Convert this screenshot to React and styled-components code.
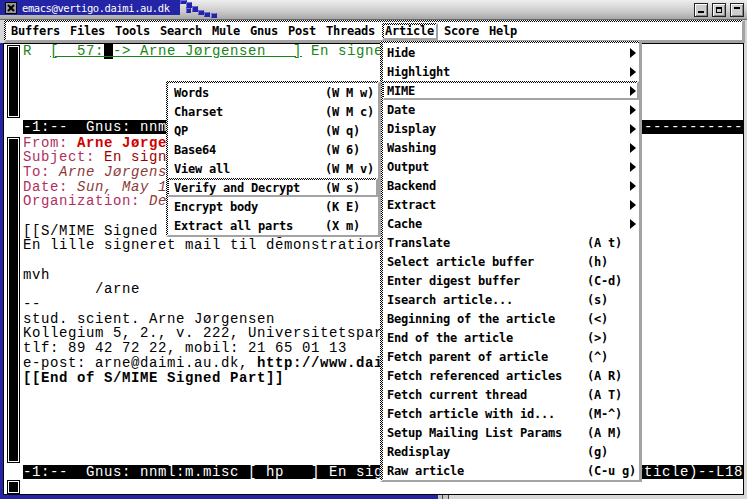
import React from "react";
import styled, { createGlobalStyle, css } from "styled-components";

const BLUE = "#2424a6";
const SHADOW = "#a3a3a3";
const CHECKER = "repeating-conic-gradient(#000 0% 25%, #fff 0% 50%) 0 0 / 2px 2px border-box";
const MENU_FONT = css`
  font-family: "DejaVu Sans Mono", monospace;
  font-weight: bold;
  font-size: 12px;
  letter-spacing: -0.225px;
  color: #000;
`;
const BUF_FONT = css`
  font-family: "Liberation Mono", "DejaVu Sans Mono", monospace;
  font-size: 14px;
  letter-spacing: 0.6px;
`;

const raised = css`
  border-style: solid;
  border-color: transparent ${SHADOW} ${SHADOW} transparent;
  background: linear-gradient(#fff, #fff) padding-box, ${CHECKER};
`;

const GlobalStyle = createGlobalStyle`
  html, body { margin: 0; padding: 0; background: #d6d6d6; }
  body { width: 747px; height: 499px; overflow: hidden; }
  #root { width: 747px; height: 499px; }
  * { box-sizing: border-box; }
`;

const Window = styled.div`
  position: relative;
  width: 747px;
  height: 499px;
  display: flex;
  flex-direction: column;
  background: #d6d6d6;
  overflow: hidden;
`;

/* ---------- title bar ---------- */
const TitleBar = styled.div`
  height: 20px;
  flex: none;
  display: flex;
  align-items: flex-start;
  background: linear-gradient(#eeeeee, #cbcbcb 60%, #a8a8a8);
  border-bottom: 1px solid #686868;
`;
const TitleTab = styled.div`
  height: 15px;
  width: 180px;
  flex: none;
  display: flex;
  align-items: center;
  gap: 5px;
  padding-left: 5px;
  background: ${BLUE};
  color: #fff;
  font-family: "DejaVu Sans Mono", monospace;
  font-size: 10.5px;
  letter-spacing: -0.42px;
  line-height: 15px;
`;
const TitleText = styled.span`
  padding-top: 1px;
`;
const TitleButtons = styled.div`
  margin-left: auto;
  margin-top: 3px;
  padding-right: 3px;
  display: flex;
  gap: 4px;
`;
const TButton = styled.div`
  width: 14px;
  height: 14px;
  border: 1px solid #222;
  background: #cdcdcd;
  box-shadow: inset 1px 1px #fff, inset -1px -1px #8a8a8a;
  display: flex;
  justify-content: center;
  align-items: ${(p) => p.$align};
  padding: 3px 2px;
`;
const Bar = styled.span`
  width: 6px;
  height: 2px;
  background: #000;
`;
const MaxBox = styled.span`
  width: 6px;
  height: 6px;
  border: 1px solid #000;
  border-top-width: 2px;
`;

/* ---------- menubar ---------- */
const MenuBarRow = styled.div`
  height: 23px;
  flex: none;
  display: flex;
  padding: 0 2px 0 4px;
`;
const MenuBar = styled.div`
  ${raised};
  border-width: 2px 3px 3px 2px;
  flex: 1;
  display: flex;
  align-items: flex-start;
`;
const MenuItem = styled.div`
  ${MENU_FONT};
  padding: 1px 5px 0;
  line-height: 17px;
  white-space: pre;
`;
const MenuItemActive = styled.div`
  ${MENU_FONT};
  ${raised};
  border-width: 2px;
  margin: 1px 1px 0 2px;
  padding: 0 2px 0 1px;
  line-height: 13px;
  white-space: pre;
`;

/* ---------- emacs frame ---------- */
const FrameRow = styled.div`
  flex: 1;
  min-height: 0;
  display: flex;
`;
const LeftEdge = styled.div`
  width: 4px;
  flex: none;
  background: ${BLUE};
  border-right: 1px solid #000;
`;
const Emacs = styled.div`
  width: 740px;
  flex: none;
  background: #fff;
  border-top: 1px solid #000;
  border-bottom: 1px solid #000;
  border-right: 1px solid #000;
  display: flex;
  flex-direction: column;
`;
const Pane = styled.div`
  height: ${(p) => p.$h}px;
  flex: none;
  display: flex;
  overflow: hidden;
`;
const ScrollBar = styled.div`
  width: 13px;
  flex: none;
  margin: ${(p) => p.$m};
  border: 1px solid #000;
  padding: 1px;
  background: #fff;
  &::after {
    content: "";
    display: block;
    height: 100%;
    background: #000;
  }
`;
const Buffer = styled.div`
  ${BUF_FONT};
  flex: 1;
  min-width: 0;
  overflow: hidden;
  line-height: 14.7px;
  white-space: pre;
  color: #000;
  padding-top: ${(p) => p.$pt || 0}px;
`;
const Line = styled.div`
  height: 14.7px;
`;
const Green = styled.span`
  color: #1a841a;
`;
const Under = styled.span`
  text-decoration: underline;
  text-decoration-color: #1a841a;
  text-underline-offset: 1px;
`;
const Cursor = styled.span`
  background: #000;
`;
const HName = styled.span`
  color: #b03060;
`;
const FromVal = styled.span`
  color: #d00000;
  font-weight: bold;
`;
const SubjVal = styled.span`
  color: #9a0000;
`;
const ItalVal = styled.span`
  color: #8b3a3a;
  font-style: italic;
`;
const Bold = styled.span`
  font-weight: bold;
`;
const ModeLine = styled.div`
  ${BUF_FONT};
  height: 14px;
  flex: none;
  margin-left: 19px;
  background: #000;
  color: #fff;
  line-height: 14px;
  white-space: pre;
  overflow: hidden;
`;

/* ---------- bottom strip ---------- */
const BottomStrip = styled.div`
  height: 4px;
  flex: none;
  display: flex;
`;
const BottomBlue = styled.div`
  width: 438px;
  background: ${BLUE};
`;
const BottomGray = styled.div`
  flex: 1;
  background: linear-gradient(
    90deg,
    #c4c4c4 4px,
    #444 4px 5px,
    #c4c4c4 5px 10px,
    #444 10px 11px,
    #d8d8d8 11px
  );
`;

/* ---------- popup menus ---------- */
const Popup = styled.div`
  position: absolute;
  left: ${(p) => p.$x}px;
  top: ${(p) => p.$y}px;
  width: ${(p) => p.$w}px;
  ${raised};
  border-width: ${(p) => p.$bw};
  display: flex;
  flex-direction: column;
`;
const MenuRow = styled.div`
  ${MENU_FONT};
  height: 19px;
  display: flex;
  align-items: center;
  line-height: 15px;
  white-space: pre;
  border-style: solid;
  border-width: 2px 2px 2px 1px;
  border-color: transparent;
  padding: 1px ${(p) => p.$pr}px 0 ${(p) => p.$pl}px;
  ${(p) => p.$active && raised};
`;
const Label = styled.span`
  width: ${(p) => p.$w}px;
  flex: none;
  overflow: hidden;
`;
const Key = styled.span`
  flex: none;
`;
const Arrow = styled.span`
  margin-left: auto;
  width: 0;
  height: 0;
  border-left: 6px solid #000;
  border-top: 5px solid transparent;
  border-bottom: 5px solid transparent;
`;

const menuBarItems = [
  "Buffers", "Files", "Tools", "Search", "Mule", "Gnus", "Post", "Threads",
  "Article", "Score", "Help",
];

const articleItems = [
  { label: "Hide", sub: true },
  { label: "Highlight", sub: true },
  { label: "MIME", sub: true, active: true },
  { label: "Date", sub: true },
  { label: "Display", sub: true },
  { label: "Washing", sub: true },
  { label: "Output", sub: true },
  { label: "Backend", sub: true },
  { label: "Extract", sub: true },
  { label: "Cache", sub: true },
  { label: "Translate", key: "(A t)" },
  { label: "Select article buffer", key: "(h)" },
  { label: "Enter digest buffer", key: "(C-d)" },
  { label: "Isearch article...", key: "(s)" },
  { label: "Beginning of the article", key: "(<)" },
  { label: "End of the article", key: "(>)" },
  { label: "Fetch parent of article", key: "(^)" },
  { label: "Fetch referenced articles", key: "(A R)" },
  { label: "Fetch current thread", key: "(A T)" },
  { label: "Fetch article with id...", key: "(M-^)" },
  { label: "Setup Mailing List Params", key: "(A M)" },
  { label: "Redisplay", key: "(g)" },
  { label: "Raw article", key: "(C-u g)" },
];

const mimeItems = [
  { label: "Words", key: "(W M w)" },
  { label: "Charset", key: "(W M c)" },
  { label: "QP", key: "(W q)" },
  { label: "Base64", key: "(W 6)" },
  { label: "View all", key: "(W M v)" },
  { label: "Verify and Decrypt", key: "(W s)", active: true },
  { label: "Encrypt body", key: "(K E)" },
  { label: "Extract all parts", key: "(X m)" },
];

const dashes = "-".repeat(60);
const topMode = "-1:--  Gnus: nnml:m.misc      (Summary Plugged)--L3--All" + dashes;
const bottomMode =
  "-1:--  Gnus: nnml:m.misc [ hp   ] En signeret mail                (Article)--L18--All" + dashes;

function Steps() {
  const sq = [
    [0, 0, 7, 4],
    [6, 2, 6, 6],
    [12, 6, 6, 6],
    [6, 8, 5, 5],
    [18, 10, 6, 5],
    [24, 12, 6, 5],
    [31, 13, 6, 5],
  ];
  return (
    <svg width="40" height="19" viewBox="0 0 40 19" style={{ flex: "none" }}>
      {sq.map(([x, y, w, h], i) => (
        <g key={i}>
          <rect x={x} y={y} width={w} height={h} fill={BLUE} />
          <path d={`M${x + 0.5} ${y + h - 0.5} V${y + 0.5} H${x + w - 0.5}`} stroke="#7070e0" fill="none" />
        </g>
      ))}
    </svg>
  );
}

function CloseIcon() {
  return (
    <svg width="12" height="12" viewBox="0 0 12 12" style={{ flex: "none" }}>
      <rect x="0.5" y="0.5" width="11" height="11" fill="#9a9a9a" stroke="#000" />
      <path d="M3 3 L9 9 M9 3 L3 9" stroke="#000" strokeWidth="2" />
    </svg>
  );
}

export default function App() {
  return (
    <>
      <GlobalStyle />
      <Window>
        <TitleBar>
          <TitleTab>
            <CloseIcon />
            <TitleText>emacs@vertigo.daimi.au.dk</TitleText>
          </TitleTab>
          <Steps />
          <TitleButtons>
            <TButton $align="flex-end"><Bar /></TButton>
            <TButton $align="center"><MaxBox /></TButton>
            <TButton $align="flex-start"><Bar /></TButton>
          </TitleButtons>
        </TitleBar>

        <MenuBarRow>
          <MenuBar>
            {menuBarItems.map((m) =>
              m === "Article" ? (
                <MenuItemActive key={m}>{m}</MenuItemActive>
              ) : (
                <MenuItem key={m}>{m}</MenuItem>
              )
            )}
          </MenuBar>
        </MenuBarRow>

        <FrameRow>
          <LeftEdge />
          <Emacs>
            <Pane $h={76}>
              <ScrollBar $m="1px 3px 2px 3px" />
              <Buffer>
                <Line>
                  <Green>
                    {"R  "}
                    <Under>
                      {"[  57:"}
                      <Cursor> </Cursor>
                      {"-> Arne Jørgensen   ]"}
                    </Under>
                    {" En signeret mail"}
                  </Green>
                </Line>
              </Buffer>
            </Pane>
            <ModeLine>{topMode}</ModeLine>
            <Pane $h={331}>
              <ScrollBar $m="3px 3px 2px 3px" />
              <Buffer $pt={1.5}>
                <Line><HName>From: </HName><FromVal>Arne Jørgensen &lt;arne@daimi.au.dk&gt;</FromVal></Line>
                <Line><HName>Subject: </HName><SubjVal>En signeret mail</SubjVal></Line>
                <Line><HName>To: </HName><ItalVal>Arne Jørgensen &lt;arne@daimi.au.dk&gt;</ItalVal></Line>
                <Line><HName>Date: </HName><ItalVal>Sun, May 13 2001 14:22:07</ItalVal></Line>
                <Line><HName>Organization: </HName><ItalVal>Department of Computer Science</ItalVal></Line>
                <Line> </Line>
                <Line>[[S/MIME Signed Part:Good signature from arne@daimi.au.dk]]</Line>
                <Line>En lille signeret mail til demonstration af S/MIME.</Line>
                <Line> </Line>
                <Line>mvh</Line>
                <Line>{"        /arne"}</Line>
                <Line>--</Line>
                <Line>stud. scient. Arne Jørgensen</Line>
                <Line>Kollegium 5, 2., v. 222, Universitetsparken, 8000 Århus C</Line>
                <Line>tlf: 89 42 72 22, mobil: 21 65 01 13</Line>
                <Line>e-post: arne@daimi.au.dk, <Bold>http://www.daimi.au.dk/~arne/</Bold></Line>
                <Line><Bold>[[End of S/MIME Signed Part]]</Bold></Line>
              </Buffer>
            </Pane>
            <ModeLine>{bottomMode}</ModeLine>
            <Pane $h={15}>
              <ScrollBar $m="1px 3px 0 3px" />
              <Buffer />
            </Pane>
          </Emacs>
        </FrameRow>

        <BottomStrip>
          <BottomBlue />
          <BottomGray />
        </BottomStrip>

        <Popup $x={380} $y={41} $w={262} $bw="2px 3px 2px 3px">
          {articleItems.map((it) => (
            <MenuRow key={it.label} $active={it.active} $pl={3} $pr={1}>
              <Label $w={200}>{it.label}</Label>
              {it.key && <Key>{it.key}</Key>}
              {it.sub && <Arrow />}
            </MenuRow>
          ))}
        </Popup>

        <Popup $x={166} $y={81} $w={215} $bw="2px 3px 2px 2px">
          {mimeItems.map((it) => (
            <MenuRow key={it.label} $active={it.active} $pl={5} $pr={1}>
              <Label $w={151}>{it.label}</Label>
              <Key>{it.key}</Key>
            </MenuRow>
          ))}
        </Popup>
      </Window>
    </>
  );
}
